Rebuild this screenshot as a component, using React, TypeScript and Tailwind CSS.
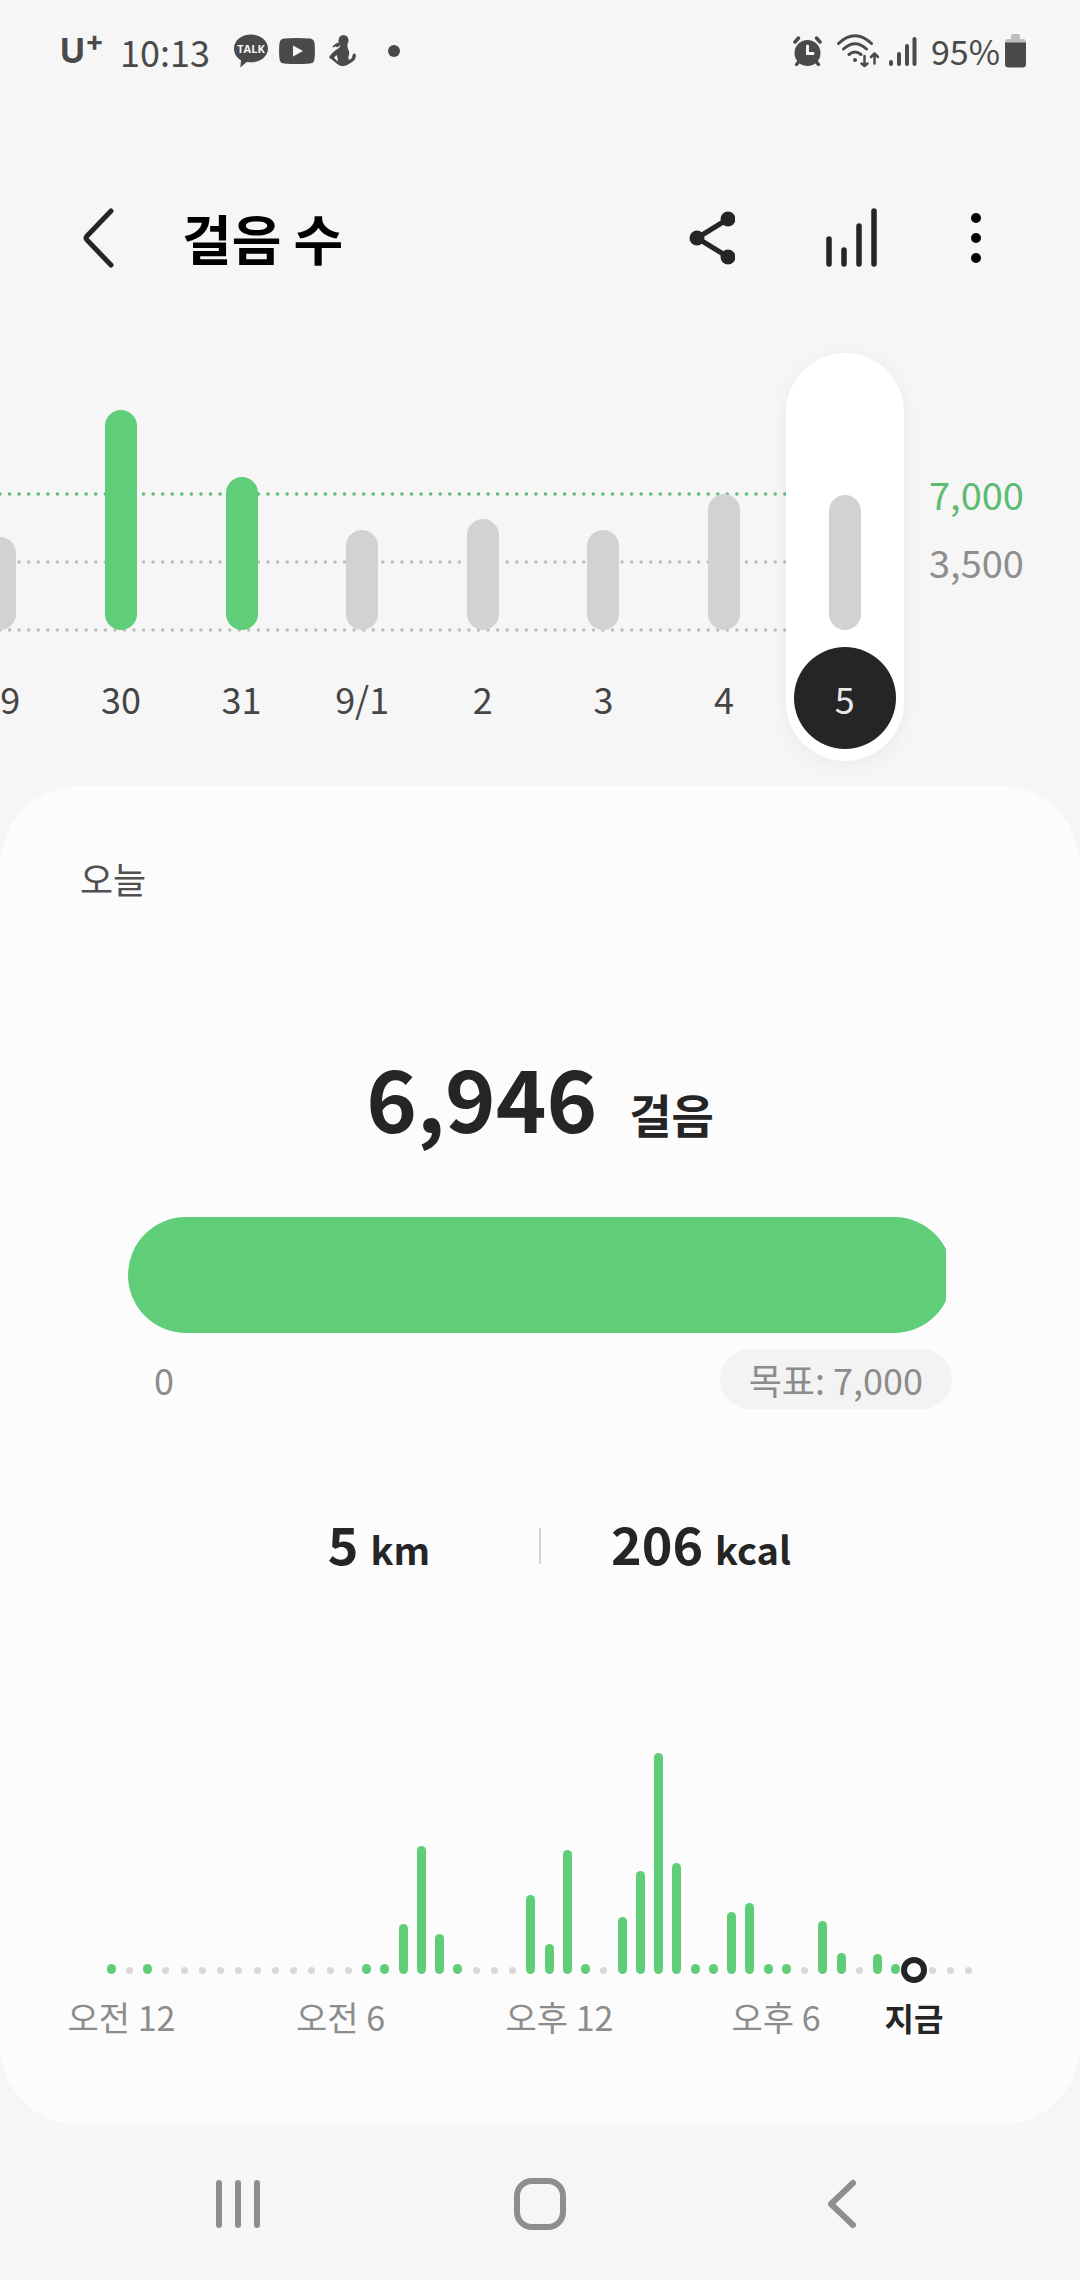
import React, { useState } from "react";

const GOAL = 7000;
const STEPS = 6946;

const days = [
  { label: "29", height: 93, reached: false },
  { label: "30", height: 220, reached: true },
  { label: "31", height: 153, reached: true },
  { label: "9/1", height: 100, reached: false },
  { label: "2", height: 111, reached: false },
  { label: "3", height: 100, reached: false },
  { label: "4", height: 136, reached: false },
  { label: "5", height: 135, reached: false },
];

// One entry per half hour, 0 = no steps
const slots = [
  10, 0, 10, 0, 0, 0, 0, 0, 0, 0, 0, 0,
  0, 0, 10, 10, 50, 128, 40, 10, 0, 0, 0, 79,
  30, 124, 10, 0, 57, 103, 221, 111, 10, 10, 62, 71,
  10, 10, 0, 53, 21, 0, 20, 10, 0, 0, 0, 0,
];
const NOW_SLOT = 44;

const StatusBar = () => (
  <div className="flex h-[102px] items-center justify-between pl-[60px] pr-[54px] text-[#4a4a4a]">
    <div className="flex items-center">
      <div className="flex w-10 items-start font-['Inter',sans-serif] font-bold">
        <span className="text-[34px] leading-10">U</span>
        <span className="text-[28px] leading-5">+</span>
      </div>
      <span className="ml-5 w-24 text-[36px] leading-10">10:13</span>

      {/* Talk */}
      <svg className="ml-[18px]" width="34" height="34" viewBox="0 0 34 34" fill="currentColor">
        <path d="M17 0.5C7.6 0.5 0 6.7 0 14.4c0 5 2.500 9.300 7 11.800L6.300 33.500l6.500-5.400c1 .2 3.100.2 4.200.2 9.400 0 17-6.200 17-13.900S26.400.5 17 .5z" />
        <text x="17" y="19" textAnchor="middle" fontSize="11" fontWeight="700" fontFamily="Open Sans, sans-serif" fill="#f6f6f6">
          TALK
        </text>
      </svg>

      {/* Video */}
      <svg className="ml-[11px]" width="36" height="28" viewBox="0 0 36 28">
        <path d="M5 1.500q13-1.200 26 0 4 .5 4.500 4.500.9 8 0 16-.5 4-4.500 4.500-13 1.200-26 0-4-.5-4.500-4.500-.9-8 0-16Q1 2 5 1.500z" fill="currentColor" />
        <path d="M14 8.500v11l10-5.500z" fill="#f6f6f6" />
      </svg>

      {/* Figure */}
      <svg className="ml-[14px]" width="27" height="32" viewBox="0 0 27 32" fill="currentColor">
        <ellipse cx="14.500" cy="5.500" rx="5" ry="5.500" />
        <path d="M10 7.500Q6 8 3 12.500q3-.5 4-1.200.3 1.200 1.500 1 2-1 3-3z" />
        <path
          d="M11.500 9h7q-.5 3.500 1 6 1.500 3.500 0 6.500-.7 2 1 3.500Q24 23 23.500 20q1.500-2.500 3.200-.5Q27.500 25.500 21.500 28 14 34 7.500 28.500 5 26 0 22.500 1 19.500 7.500 14.500 11 13.500 11.500 9zM7.500 20L5 22.500l3.500 4Q9.200 23 7.500 20z"
          fillRule="evenodd"
        />
      </svg>

      <span className="ml-8 size-3 rounded-full bg-[#4a4a4a]" />
    </div>

    <div className="flex items-center">
      {/* Alarm */}
      <svg width="29" height="31" viewBox="0 0 29 31" fill="none" stroke="currentColor" strokeLinecap="round">
        <circle cx="14.500" cy="17" r="13" fill="currentColor" stroke="none" />
        <path d="M2 6l3.500-4M27 6l-3.500-4" strokeWidth="3.500" />
        <path d="M5.500 26L3.500 28.500M23.500 26l2 2.500" strokeWidth="3.500" />
        <path d="M14.500 10v7.500h5.500" stroke="#f6f6f6" strokeWidth="3" />
      </svg>
      {/* Wifi */}
      <svg className="ml-[15px]" width="42" height="34" viewBox="0 0 42 34" fill="none" stroke="currentColor" strokeWidth="3" strokeLinecap="round" strokeLinejoin="round">
        <path d="M1.500 9.500q16.500-15.500 33 0M6.500 15q11.500-10.500 23 0M12 20.500q6-5 12 0" />
        <circle cx="18" cy="26" r="2" fill="currentColor" stroke="none" />
        <path d="M27.500 22v10M24.500 29.500l3 2.500 3-2.500M37.500 29.500v-10M34 23l3.500-3.500L41 23" strokeWidth="2.500" />
      </svg>
      {/* Signal */}
      <svg className="ml-[10px]" width="28" height="31" viewBox="0 0 28 31" stroke="currentColor" strokeWidth="4" strokeLinecap="round">
        <path d="M2 26v2M10 18v10M18 10v18M25.500 3v25" />
      </svg>
      <span className="ml-[14px] w-[74px] text-[34px] leading-10">95%</span>
      {/* Battery */}
      <svg width="21" height="34" viewBox="0 0 21 34">
        <path d="M6 5V2q0-2 2-2h5q2 0 2 2v3h3q3 0 3 3v2H0V8q0-3 3-3z" fill="#bdbdbd" />
        <path d="M0 8.500h21V30q0 3.500-3.500 3.500h-14Q0 33.500 0 30z" fill="currentColor" />
      </svg>
    </div>
  </div>
);

const Header = () => (
  <header className="mt-[68px] flex h-[136px] items-center pl-[68px] pr-[74px] text-[#252525]">
    <button aria-label="뒤로" className="flex size-[60px] items-center justify-center">
      <svg width="32" height="60" viewBox="0 0 32 60" fill="none" stroke="currentColor" strokeWidth="5" strokeLinecap="round" strokeLinejoin="round">
        <path d="M29 3L5 28q-2 2 0 4l24 25" />
      </svg>
    </button>
    <h1 className="ml-[54px] flex-1 text-[54px] font-bold leading-[68px] text-black">걸음 수</h1>
    <button aria-label="공유" className="flex size-[60px] items-center justify-center">
      <svg width="46" height="54" viewBox="0 0 46 54" stroke="currentColor" strokeWidth="5">
        <path d="M39 8L8 27l31 19" fill="none" />
        <g fill="currentColor" stroke="none">
          <circle cx="39" cy="8" r="7.500" />
          <circle cx="8" cy="27" r="7.500" />
          <circle cx="39" cy="46" r="7.500" />
        </g>
      </svg>
    </button>
    <button aria-label="차트" className="ml-[79px] flex size-[60px] items-center justify-center">
      <svg width="52" height="60" viewBox="0 0 52 60" stroke="currentColor" strokeWidth="5.500" strokeLinecap="round">
        <path d="M4 31v25M19 42v14M34 18v38M49 3v53" />
      </svg>
    </button>
    <button aria-label="더보기" className="ml-[65px] flex size-[60px] items-center justify-center">
      <svg width="10" height="52" viewBox="0 0 10 52" fill="#000">
        <circle cx="5" cy="6" r="5" />
        <circle cx="5" cy="26" r="5" />
        <circle cx="5" cy="46" r="5" />
      </svg>
    </button>
  </header>
);

const DottedLine = ({ color }: { color: string }) => (
  <svg className="h-1 w-full" aria-hidden="true">
    <line x1="0" y1="2" x2="100%" y2="2" stroke={color} strokeWidth="3.500" strokeLinecap="round" strokeDasharray="0 9.570" />
  </svg>
);

const DayChart = () => {
  const [selected, setSelected] = useState("5");

  return (
    <section className="mt-[47px] flex overflow-x-clip">
      <div className="relative flex-1">
        <div className="absolute inset-x-0 top-0 flex flex-col gap-16 pr-8 pt-[139px]">
          <DottedLine color="#5dbb74" />
          <DottedLine color="#bdbdbd" />
          <DottedLine color="#bdbdbd" />
        </div>
        {/* the oldest day is scrolled half out of view */}
        <div className="relative -ml-[60px] flex">
          {days.map((day) => {
            const active = day.label === selected;
            return (
              <div key={day.label} className="flex flex-1 justify-center">
                <button
                  onClick={() => setSelected(day.label)}
                  className={`flex h-[408px] w-[118px] flex-col items-center justify-end rounded-full pb-3 ${
                    active ? "bg-white shadow-[0_4px_20px_rgba(0,0,0,0.05)]" : ""
                  }`}
                >
                  <span
                    className={`w-8 rounded-full ${day.reached ? "bg-[#60ce79]" : "bg-[#d2d2d2]"}`}
                    style={{ height: day.height }}
                  />
                  <span
                    className={`mt-[17px] flex size-[102px] items-center justify-center rounded-full text-[36px] leading-10 ${
                      active ? "bg-[#252525] text-[#e8e8e8]" : "text-[#454545]"
                    }`}
                  >
                    {day.label}
                  </span>
                </button>
              </div>
            );
          })}
        </div>
      </div>
      <div className="flex w-[175px] flex-col gap-7 pl-6 pt-[121px] text-[38px] leading-10">
        <span className="text-[#5dbb74]">7,000</span>
        <span className="text-[#8e8e8e]">3,500</span>
      </div>
    </section>
  );
};

const HourChart = () => (
  <div className="mt-[172px]">
    <div className="mx-[102px] flex h-[221px] items-end">
      {slots.map((height, index) => (
        <div key={index} className="relative flex flex-1 justify-center">
          {index === NOW_SLOT ? (
            <span className="absolute -bottom-[9px] size-[26px] rounded-full border-[6px] border-[#252525] bg-white" />
          ) : height > 0 ? (
            <span className="w-[9px] rounded-full bg-[#60ce79]" style={{ height }} />
          ) : (
            <span className="size-[7px] rounded-full bg-[#d8d8d8]" />
          )}
        </div>
      ))}
    </div>
    <div className="mt-[19px] grid grid-cols-[219fr_219fr_219fr_214fr_62fr_123fr] px-3 text-center text-[34px] leading-[48px] text-[#8c8c8c]">
      <span>오전 12</span>
      <span>오전 6</span>
      <span>오후 12</span>
      <span>오후 6</span>
      <span className="whitespace-nowrap text-[32px] font-bold text-[#252525]">지금</span>
    </div>
  </div>
);

const TodayCard = () => (
  <main className="mt-[25px] rounded-[80px] bg-[#fcfcfc] pb-[84px] pt-[66px] text-[#252525]">
    <h2 className="pl-20 text-[36px] leading-[52px] text-[#505050]">오늘</h2>

    <div className="mt-36 flex items-baseline justify-center gap-8 font-bold leading-[96px]">
      <span className="text-[86px]">6,946</span>
      <span className="text-[46px]">걸음</span>
    </div>

    <div className="mx-32 mt-[56px] h-[116px] overflow-hidden rounded-full">
      <div className="h-full bg-[#60ce79]" style={{ width: `${(STEPS / GOAL) * 100}%` }} />
    </div>
    <div className="mx-32 mt-4 flex items-center justify-between text-[36px] leading-10 text-[#8c8c8c]">
      <span className="pl-[26px]">0</span>
      <span className="flex h-[60px] items-center rounded-full bg-[#f3f3f3] px-[29px]">목표: 7,000</span>
    </div>

    <div className="mt-[102px] flex items-center justify-center font-bold leading-[64px]">
      <div className="flex w-[320px] items-baseline justify-center gap-3">
        <span className="text-[52px]">5</span>
        <span className="text-[38px]">km</span>
      </div>
      <span className="h-9 w-[2px] bg-[#d4d4d4]" />
      <div className="flex w-[320px] items-baseline justify-center gap-3">
        <span className="text-[52px]">206</span>
        <span className="text-[38px]">kcal</span>
      </div>
    </div>

    <HourChart />
  </main>
);

const NavBar = () => (
  <nav className="grid h-[153px] grid-cols-3 px-[87px] pt-[53px] text-[#8e8e8e]">
    <button aria-label="최근 앱" className="flex h-[52px] items-center justify-center">
      <svg width="46" height="50" viewBox="0 0 46 50" stroke="currentColor" strokeWidth="6" strokeLinecap="round">
        <path d="M4 4v42M23 4v42M42 4v42" />
      </svg>
    </button>
    <button aria-label="홈" className="flex h-[52px] items-center justify-center">
      <span className="size-[52px] rounded-[18px] border-[6px] border-[#8e8e8e]" />
    </button>
    <button aria-label="뒤로 가기" className="flex h-[52px] items-center justify-center">
      <svg width="30" height="50" viewBox="0 0 30 50" fill="none" stroke="currentColor" strokeWidth="6" strokeLinecap="round" strokeLinejoin="round">
        <path d="M26 4L4 25l22 21" />
      </svg>
    </button>
  </nav>
);

export default function App() {
  return (
    <div className="min-h-screen bg-[#f6f6f6] font-['Noto_Sans_CJK_KR',sans-serif]">
      <StatusBar />
      <Header />
      <DayChart />
      <TodayCard />
      <NavBar />
    </div>
  );
}
